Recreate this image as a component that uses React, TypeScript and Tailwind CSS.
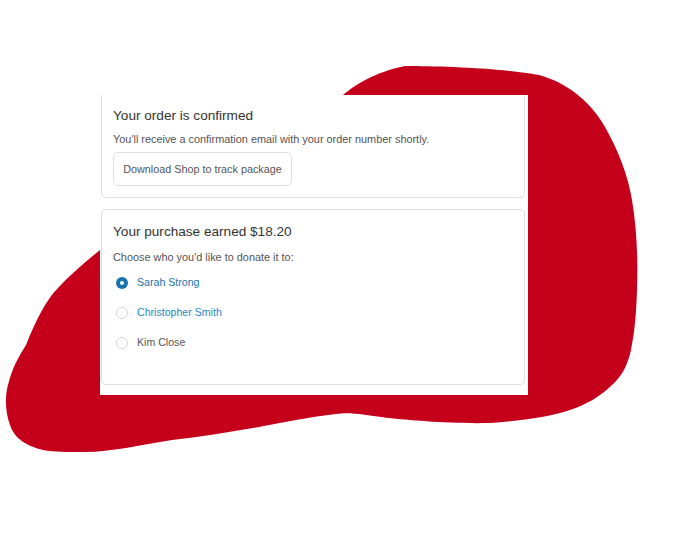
import React from "react";

function Radio({ checked }: { checked?: boolean }) {
  return checked ? (
    <span className="flex h-[12px] w-[12px] items-center justify-center rounded-full bg-[#1773b0]">
      <span className="h-[4px] w-[4px] rounded-full bg-white" />
    </span>
  ) : (
    <span className="h-[12px] w-[12px] rounded-full border border-[#d6d6d6] bg-white" />
  );
}

export default function App() {
  const options = [
    { name: "Sarah Strong", checked: true, color: "text-[#1773b0]" },
    { name: "Christopher Smith", checked: false, color: "text-[#1e88c8]" },
    { name: "Kim Close", checked: false, color: "text-[#545454]" },
  ];
  return (
    <div
      className="relative h-[542px] w-[673px] overflow-hidden bg-white"
      style={{ fontFamily: '"Liberation Sans", Arial, sans-serif' }}
    >
      <svg className="absolute left-0 top-0" width="673" height="542" viewBox="0 0 673 542">
        <path
          fill="#c5001b"
          d="M343 95 C355 85 375 72 405 66 C440 66 500 68 539 75 C565 82 590 100 605 127 C618 150 628 175 632 200 C637 230 638 260 637 290 C636 320 634 335 631 350 C627 368 620 378 612 385 C600 397 585 405 570 410 C550 417 520 421 490 423 C450 424 410 420 388 418 C365 415 350 412 336 414 C310 417 285 422 259 427 C230 432 200 437 172 440 C140 445 110 452 86 452 C65 452 55 452 43 450 C28 446 15 440 10 425 C5 412 5 395 8 385 C12 368 18 358 26 345 C36 320 46 300 58 288 C70 275 85 262 100 250 L100 95 Z"
        />
      </svg>
      <div className="absolute left-[100px] top-[95px] flex h-[300px] w-[428px] flex-col gap-[11px] overflow-hidden bg-white pl-[1px] pr-[3px]">
        <div className="mt-[-10px] flex flex-col items-start rounded-[5px] border border-[#dedede] pl-[11px] pt-[20px] pb-[11px]">
          <div className="text-[13.6px] leading-[20px] text-[#333333]">Your order is confirmed</div>
          <div className="mt-[5px] text-[10.9px] leading-[16px] text-[#545454]">
            You'll receive a confirmation email with your order number shortly.
          </div>
          <button className="mt-[5px] h-[34px] w-[179px] rounded-[5px] border border-[#dedede] bg-white text-[10.8px] text-[#545454]">
            Download Shop to track package
          </button>
        </div>
        <div className="flex flex-col items-start rounded-[5px] border border-[#dedede] pl-[11px] pt-[12px] pb-[26px]">
          <div className="text-[13.6px] leading-[20px] text-[#333333]">Your purchase earned $18.20</div>
          <div className="mt-[7px] text-[10.9px] leading-[16px] text-[#545454]">
            Choose who you'd like to donate it to:
          </div>
          <div className="mt-[3px] flex flex-col">
            {options.map((o) => (
              <div key={o.name} className="flex h-[30px] items-center gap-[9px] pl-[3px]">
                <Radio checked={o.checked} />
                <span className={`text-[10.6px] ${o.color}`}>{o.name}</span>
              </div>
            ))}
          </div>
        </div>
      </div>
    </div>
  );
}
